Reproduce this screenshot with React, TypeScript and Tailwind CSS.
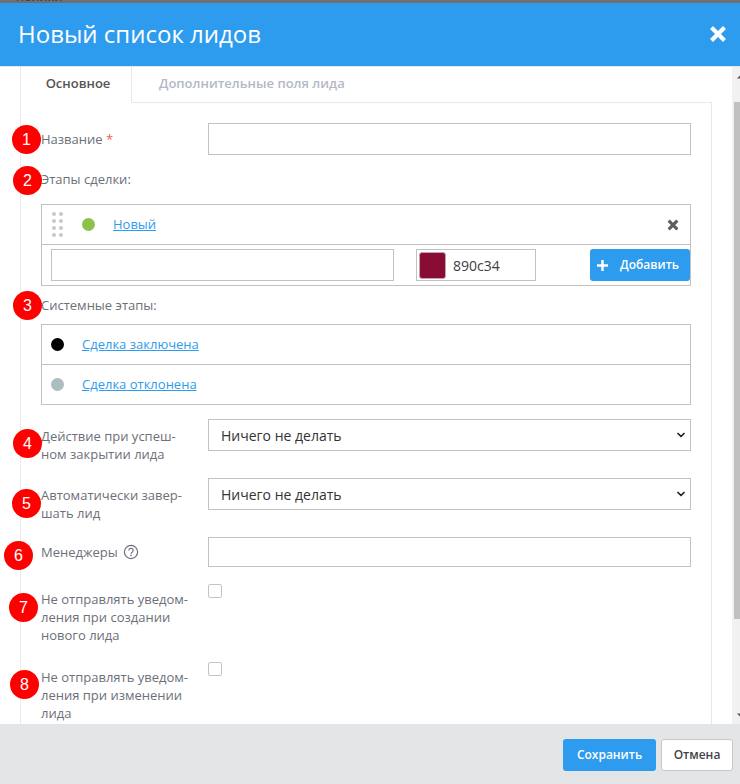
import React from "react";
import { ChevronDown } from "lucide-react";

function Badge({ n, className }: { n: number; className: string }) {
  return (
    <div className={"absolute w-[29px] h-[29px] rounded-full bg-[#fe0000] text-white text-[16px] leading-[29px] text-center font-['Liberation_Sans',sans-serif] " + className}>
      {n}
    </div>
  );
}

function Dot({ color }: { color: string }) {
  return <span className={"block w-[13px] h-[13px] rounded-full " + color} />;
}

function Grip() {
  return (
    <span className="grid grid-cols-2 gap-x-[3px] gap-y-[3px] w-[11px]">
      {Array.from({ length: 8 }).map((_, i) => (
        <span key={i} className="block w-[4px] h-[4px] rounded-full bg-[#c8c8c8]" />
      ))}
    </span>
  );
}

function Cross({ size, width, color }: { size: number; width: number; color: string }) {
  return (
    <svg width={size} height={size} viewBox="0 0 18 18" fill="none">
      <path d="M2.5 2.5L15.5 15.5M15.5 2.5L2.5 15.5" stroke={color} strokeWidth={width} />
    </svg>
  );
}

function Select() {
  return (
    <div className="w-[483px] h-[32px] border border-[#c2c2c2] bg-white flex items-center justify-between pl-[12px] pr-[3px] text-[14px] text-[#333]">
      <span>Ничего не делать</span>
      <ChevronDown size={12} strokeWidth={3.5} className="text-[#222]" />
    </div>
  );
}

function Label({ children, className = "" }: { children: React.ReactNode; className?: string }) {
  return <div className={"w-[167px] text-[13px] leading-[18px] text-[#6b7079] " + className}>{children}</div>;
}

export default function App() {
  return (
    <div className="relative w-[740px] h-[784px] overflow-hidden flex flex-col bg-white font-['Open_Sans',sans-serif]">
      <div className="h-[3px] bg-[#6f6f6f] shrink-0 overflow-hidden pl-[16px]">
        <div className="-mt-[13px] text-[13px] leading-[18px] text-[#3a3a3a]">полики</div>
      </div>
      <div className="h-[63px] shrink-0 bg-[#2d9bee] flex items-center justify-between pl-[18px] pr-[13px]">
        <h1 className="text-[24px] leading-[32px] text-white -mt-[2px]">Новый список лидов</h1>
        <span className="-mt-[2px]"><Cross size={18} width={4.2} color="#ffffff" /></span>
      </div>
      <div className="h-[1px] shrink-0 bg-[#e6e6e6]" />

      <div className="flex-1 min-h-0 overflow-hidden flex">
        <div className="w-[732px] pl-[20px] shrink-0">
          <div className="w-[692px] h-full border-l border-[#e8eaee] flex flex-col relative">
            <div className="flex h-[36px] shrink-0">
              <div className="w-[111px] h-[36px] bg-white border-r border-[#e8e8e8] text-[13px] font-semibold text-[#555] flex items-center justify-center relative z-10 pl-[4px] pb-[2px]">
                Основное
              </div>
              <div className="flex-1 border-b border-[#e8e8e8] text-[13px] font-semibold text-[#b3b9c7] pl-[27px] leading-[32px]">
                Дополнительные поля лида
              </div>
            </div>
            <div className="flex-1 border-r border-[#e8e8e8] -mt-px pl-[20px] pt-[21px]">
              <div className="flex items-center">
                <Label>
                  Название <span className="text-[#f0605a]">*</span>
                </Label>
                <div className="w-[483px] h-[32px] border border-[#c2c2c2]" />
              </div>

              <div className="text-[13px] leading-[18px] text-[#6b7079] mt-[15px]">Этапы сделки:</div>

              <div className="w-[650px] border border-[#c2c2c2] mt-[16px]">
                <div className="h-[40px] border-b border-[#c2c2c2] flex items-center pl-[10px] pr-[11px]">
                  <Grip />
                  <span className="ml-[19px]"><Dot color="bg-[#8bc34a]" /></span>
                  <a className="ml-[18px] text-[13px] text-[#2d9bee] underline">Новый</a>
                  <span className="ml-auto"><Cross size={12} width={4.6} color="#5a5f66" /></span>
                </div>
                <div className="h-[40px] flex items-center pl-[9px]">
                  <div className="w-[343px] h-[32px] border border-[#c2c2c2]" />
                  <div className="ml-[22px] w-[120px] h-[32px] border border-[#c2c2c2] flex items-center pl-[2px]">
                    <span className="block w-[27px] h-[27px] rounded-[3px] bg-[#890c34] border border-[#c9a0ad]" />
                    <span className="ml-[7px] text-[14px] text-[#3c3f44]">890c34</span>
                  </div>
                  <button className="ml-auto w-[100px] h-[32px] rounded-[3px] bg-[#2d9bee] text-white flex items-center pl-[7px] text-[12px] font-semibold">
                    <svg width="11" height="11" viewBox="0 0 11 11" fill="none">
                      <path d="M5.5 0V11M0 5.5H11" stroke="#ffffff" strokeWidth="2.4" />
                    </svg>
                    <span className="ml-[12px]">Добавить</span>
                  </button>
                </div>
              </div>

              <div className="text-[13px] leading-[18px] text-[#6b7079] mt-[10px]">Системные этапы:</div>

              <div className="w-[650px] border border-[#c2c2c2] mt-[10px]">
                <div className="h-[40px] border-b border-[#c2c2c2] flex items-center pl-[9px]">
                  <Dot color="bg-black" />
                  <a className="ml-[18px] text-[13px] text-[#2d9bee] underline">Сделка заключена</a>
                </div>
                <div className="h-[39px] flex items-center pl-[9px]">
                  <Dot color="bg-[#adbbc3]" />
                  <a className="ml-[18px] text-[13px] text-[#2d9bee] underline">Сделка отклонена</a>
                </div>
              </div>

              <div className="flex items-start mt-[14px]">
                <Label className="pt-[8px]">Действие при успеш-<br />ном закрытии лида</Label>
                <Select />
              </div>
              <div className="flex items-start mt-[15px]">
                <Label className="pt-[8px]">Автоматически завер-<br />шать лид</Label>
                <Select />
              </div>
              <div className="flex items-center mt-[15px]">
                <Label className="flex items-center">
                  Менеджеры
                  <svg width="16" height="16" viewBox="0 0 16 16" fill="none" className="ml-[5px]">
                    <circle cx="8" cy="8" r="6.6" stroke="#6b7079" strokeWidth="1.2" />
                    <path d="M5.9 6.4a2.1 2.1 0 1 1 3.2 1.8c-.7.4-1.1.8-1.1 1.5" stroke="#6b7079" strokeWidth="1.2" />
                    <circle cx="8" cy="11.4" r=".8" fill="#6b7079" />
                  </svg>
                </Label>
                <div className="w-[483px] h-[30px] border border-[#c2c2c2]" />
              </div>
              <div className="flex items-start mt-[17px]">
                <Label className="pt-[6px]">Не отправлять уведом-<br />ления при создании<br />нового лида</Label>
                <span className="block w-[14px] h-[14px] rounded-[2px] border border-[#c4c4c4]" />
              </div>
              <div className="flex items-start mt-[18px]">
                <Label className="pt-[6px]">Не отправлять уведом-<br />ления при изменении<br />лида</Label>
                <span className="block w-[14px] h-[14px] rounded-[2px] border border-[#c4c4c4]" />
              </div>
            </div>
          </div>
        </div>
        <div className="w-[8px] flex flex-col bg-[#f1f1f1] overflow-hidden">
          <svg width="8" height="4" viewBox="0 0 8 4" className="mt-[8px] shrink-0">
            <path d="M5 3.5L8 0.5V3.5Z" fill="#505050" />
          </svg>
          <div className="h-[517px] ml-[2px] mt-[23px] shrink-0 bg-[#c1c1c1]" />
          <svg width="8" height="4" viewBox="0 0 8 4" className="mt-[94px] shrink-0">
            <path d="M5 0.5H8V3.5Z" fill="#505050" />
          </svg>
        </div>
      </div>

      <div className="h-[60px] shrink-0 bg-[#e4e5e7] flex items-center justify-end pr-[7px] gap-[5px] pt-[2px]">
        <button className="w-[93px] h-[32px] rounded-[3px] bg-[#2d9bee] text-white text-[12px] font-semibold">Сохранить</button>
        <button className="w-[72px] h-[32px] rounded-[3px] bg-white border border-[#c8c8c8] text-[#444] text-[12px] font-semibold">Отмена</button>
      </div>

      <Badge n={1} className="left-[12px] top-[125px]" />
      <Badge n={2} className="left-[13px] top-[166px]" />
      <Badge n={3} className="left-[13px] top-[291px]" />
      <Badge n={4} className="left-[13px] top-[429px]" />
      <Badge n={5} className="left-[12px] top-[489px]" />
      <Badge n={6} className="left-[4px] top-[541px]" />
      <Badge n={7} className="left-[9px] top-[593px]" />
      <Badge n={8} className="left-[10px] top-[670px]" />
    </div>
  );
}
